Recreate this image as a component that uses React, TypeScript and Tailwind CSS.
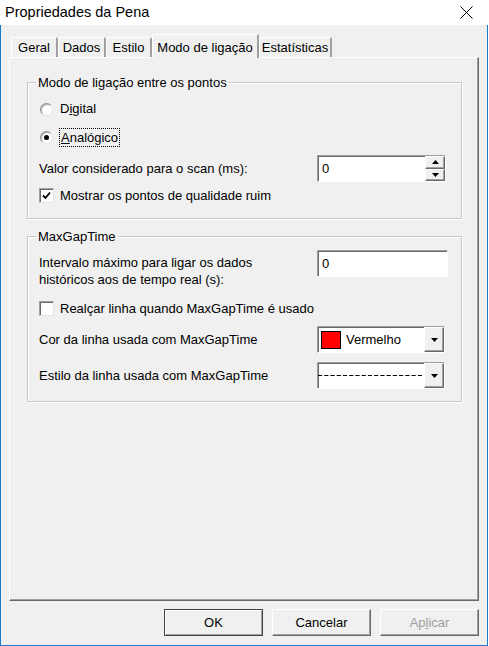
import type { ReactNode } from 'react';

const raised =
  'border border-t-white border-l-white border-r-[#696969] border-b-[#696969] shadow-[inset_-1px_-1px_0_#a0a0a0]';
const sunken =
  'border border-t-[#a0a0a0] border-l-[#a0a0a0] border-r-white border-b-white shadow-[inset_1px_1px_0_#696969]';

const Arrow = ({ up = false }: { up?: boolean }) => (
  <svg width="7" height="4" viewBox="0 0 7 4">
    <polygon points={up ? '0,4 7,4 3.5,0' : '0,0 7,0 3.5,4'} fill="#000" />
  </svg>
);

const Radio = ({ checked }: { checked?: boolean }) => (
  <span className="w-[13px] h-[13px] rounded-full bg-white border border-t-[#909090] border-l-[#909090] border-r-[#e3e3e3] border-b-[#e3e3e3] shadow-[inset_1px_1px_0_#b0b0b0] flex items-center justify-center shrink-0">
    {checked && <span className="w-[5px] h-[5px] rounded-full bg-black" />}
  </span>
);

const Check = ({ checked }: { checked?: boolean }) => (
  <span className="w-[15px] h-[15px] bg-white border border-t-[#a0a0a0] border-l-[#a0a0a0] border-r-[#e3e3e3] border-b-[#e3e3e3] shadow-[inset_1px_1px_0_#696969] flex items-center justify-center shrink-0">
    {checked && (
      <svg width="9" height="9" viewBox="0 0 9 9">
        <path d="M1 4.5 L3.5 7 L8 1.5" stroke="#000" strokeWidth="1.8" fill="none" />
      </svg>
    )}
  </span>
);

const Row = ({ label, children, className = '' }: { label: ReactNode; children?: ReactNode; className?: string }) => (
  <div className={`flex items-center ${className}`}>
    <div className="w-[278px]">{label}</div>
    {children}
  </div>
);

const Group = ({ title, children, className = '' }: { title: string; children: ReactNode; className?: string }) => (
  <fieldset className={`border border-[#c8c8c8] shadow-[inset_1px_1px_0_#fff,1px_1px_0_#fff] ${className}`}>
    <legend className="ml-[8px] px-[2px] leading-[15px]">{title}</legend>
    <div className="pl-[11px]">{children}</div>
  </fieldset>
);

const ComboButton = () => (
  <div className={`w-[20px] h-full bg-[#f0f0f0] ${raised} flex items-center justify-center`}>
    <Arrow />
  </div>
);

export default function App() {
  const tabs = [
    { label: 'Geral', w: 'w-[47px]' },
    { label: 'Dados', w: 'w-[48px]' },
    { label: 'Estilo', w: 'w-[46px]' },
  ];

  return (
    <div className="w-[489px] h-[646px] bg-white flex font-['Liberation_Sans',Arial,sans-serif] text-[13px] text-black">
      <div className="w-[488px] h-[646px] flex flex-col">
        {/* title bar */}
        <div className="h-[25px] bg-white flex items-center justify-between pl-[5px] pr-[15px] shrink-0">
          <span className="text-[14.5px]">Propriedades da Pena</span>
          <svg width="13" height="13" viewBox="0 0 13 13">
            <path d="M0.5 0.5 L12.5 12.5 M12.5 0.5 L0.5 12.5" stroke="#000" strokeWidth="1" />
          </svg>
        </div>

        <div className="flex-1 bg-[#f0f0f0] border-x border-b border-[#1979cf] px-[8px] pt-[9px] flex flex-col">
          {/* tabs */}
          <div className="relative z-10 h-[23px] flex items-end pl-[2px]">
            {tabs.map((t) => (
              <div
                key={t.label}
                className={`${t.w} h-[20px] rounded-t-[2px] border-t border-l border-r-2 border-t-white border-l-white border-r-[#a0a0a0] flex items-center justify-center`}
              >
                {t.label}
              </div>
            ))}
            <div className="w-[107px] h-[24px] -mb-[1px] bg-[#f0f0f0] rounded-t-[2px] border-t border-l border-r-2 border-t-white border-l-white border-r-[#a0a0a0] flex items-start justify-center pt-[3px]">
              Modo de ligação
            </div>
            <div className="w-[73px] h-[20px] rounded-t-[2px] border-t border-l border-r-2 border-t-white border-l-white border-r-[#a0a0a0] flex items-center justify-center">
              Estatísticas
            </div>
          </div>

          {/* panel */}
          <div className={`h-[544px] ${raised} pl-[17px] pr-[16px] pt-[17px]`}>
            <Group title="Modo de ligação entre os pontos" className="pb-[14px]">
              <div className="mt-[10px] h-[18px] flex items-center gap-[7px] pl-[1px]">
                <Radio />
                <span>
                  D<span className="underline">i</span>gital
                </span>
              </div>
              <div className="mt-[10px] h-[18px] flex items-center gap-[6px] pl-[1px]">
                <Radio checked />
                <span className="border border-dotted border-black px-[1px] leading-[17px]">
                  <span className="underline">A</span>nalógico
                </span>
              </div>
              <Row label="Valor considerado para o scan (ms):" className="mt-[9px] h-[27px]">
                <div className={`w-[129px] h-[27px] bg-white ${sunken} flex`}>
                  <span className="flex-1 pl-[4px] pt-[3px]">0</span>
                  <div className="w-[20px] flex flex-col">
                    <div className={`flex-1 bg-[#f0f0f0] ${raised} flex items-center justify-center`}>
                      <Arrow up />
                    </div>
                    <div className={`flex-1 bg-[#f0f0f0] ${raised} flex items-center justify-center`}>
                      <Arrow />
                    </div>
                  </div>
                </div>
              </Row>
              <div className="mt-[5px] h-[17px] flex items-center gap-[6px]">
                <Check checked />
                <span>Mostrar os pontos de qualidade ruim</span>
              </div>
            </Group>

            <Group title="MaxGapTime" className="mt-[10px] pb-[12px]">
              <div className="mt-[6px] flex items-start">
                <div className="w-[278px] mt-[4px] leading-[17px]">
                  Intervalo máximo para ligar os dados
                  <br />
                  históricos aos de tempo real (s):
                </div>
                <div className={`w-[131px] h-[27px] bg-white ${sunken} pl-[4px] pt-[3px]`}>0</div>
              </div>
              <div className="mt-[12px] h-[17px] flex items-center gap-[6px]">
                <Check />
                <span>Realçar linha quando MaxGapTime é usado</span>
              </div>
              <Row label="Cor da linha usada com MaxGapTime" className="mt-[9px] h-[27px]">
                <div className={`w-[128px] h-[27px] bg-white ${sunken} flex items-center`}>
                  <span className="ml-[3px] w-[20px] h-[18px] bg-[#ff0000] border border-black" />
                  <span className="flex-1 pl-[5px]">Vermelho</span>
                  <ComboButton />
                </div>
              </Row>
              <Row label="Estilo da linha usada com MaxGapTime" className="mt-[9px] h-[27px]">
                <div className={`w-[128px] h-[27px] bg-white ${sunken} flex items-center`}>
                  <svg className="flex-1" height="3" viewBox="0 0 102 3" preserveAspectRatio="none">
                    <line x1="0" y1="1.5" x2="102" y2="1.5" stroke="#000" strokeWidth="1" strokeDasharray="4 2" />
                  </svg>
                  <ComboButton />
                </div>
              </Row>
            </Group>
          </div>

          {/* buttons */}
          <div className="mt-[8px] flex justify-end gap-[9px]">
            <button className="w-[99px] h-[27px] bg-[#f0f0f0] border border-[#444] shadow-[inset_1px_1px_0_#fff,inset_-1px_-1px_0_#a0a0a0]">
              OK
            </button>
            <button className={`w-[99px] h-[27px] bg-[#f0f0f0] ${raised}`}>Cancelar</button>
            <button className={`w-[99px] h-[27px] bg-[#f0f0f0] ${raised} text-[#a0a0a0]`}>
              Ap<span className="underline">l</span>icar
            </button>
          </div>
        </div>
      </div>
    </div>
  );
}
